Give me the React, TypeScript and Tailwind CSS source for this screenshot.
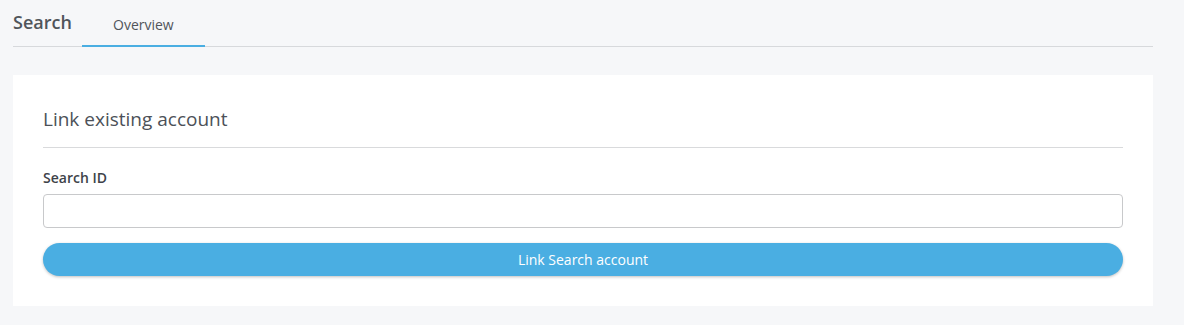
export default function App() {
  return (
    <div
      className="min-h-[325px] w-[1184px] bg-[#f6f7f9] pl-[13px] pr-[31px] pb-[19px]"
      style={{ fontFamily: '"Open Sans", sans-serif' }}
    >
      {/* Header with tabs */}
      <div className="flex h-[47px] items-end border-b border-[#d7d9dc]">
        <h1 className="mb-[12px] text-[18px] leading-[24px] font-semibold text-[#50555b]">Search</h1>
        <div className="ml-[10px] mb-[-1px] flex h-[47px] w-[123px] items-center justify-center border-b-2 border-[#4aaee2] pt-[3px]">
          <span className="text-[14px] text-[#50555b]">Overview</span>
        </div>
      </div>

      {/* Card */}
      <div className="mt-[28px] bg-white px-[30px] pt-[32px] pb-[30px]">
        <h2 className="border-b border-[#d9dadc] pb-[16px] text-[19px] leading-[24px] text-[#4c5158]">
          Link existing account
        </h2>
        <label className="mt-[21px] block text-[14px] leading-[18px] font-semibold text-[#3e4349]">
          Search ID
        </label>
        <input
          type="text"
          className="mt-[7px] block h-[34px] w-full rounded-[4px] border border-[#c8c9cb] bg-white px-3 text-[14px] outline-none"
        />
        <button className="mt-[15px] block h-[33px] w-full rounded-full bg-[#4aaee2] text-[14px] text-white shadow-[0_1px_3px_rgba(0,0,0,0.25)]">
          Link Search account
        </button>
      </div>
    </div>
  );
}
